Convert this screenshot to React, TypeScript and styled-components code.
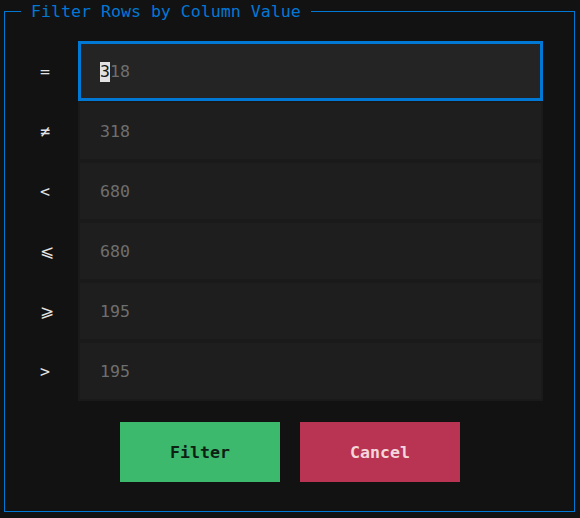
import React from "react";
import styled, { createGlobalStyle } from "styled-components";

const Global = createGlobalStyle`
  html, body {
    margin: 0;
    padding: 0;
    background: #121212;
  }
  body {
    font-family: "DejaVu Sans Mono", "Liberation Mono", monospace;
    font-size: 16.6px;
    line-height: 20px;
  }
`;

const Dialog = styled.fieldset`
  box-sizing: border-box;
  width: 571px;
  height: 511px;
  margin: 1px 5px 6px 4px;
  padding: 20px 0 0 0;
  min-width: 0;
  border: 1px solid #0178d4;
  background: #121212;
`;

const Title = styled.legend`
  margin-left: 16px;
  padding: 0 10px;
  height: 20px;
  line-height: 22px;
  color: #0178d4;
  white-space: pre;
`;

const Rows = styled.div`
  display: grid;
  grid-template-columns: 73px 465px;
  grid-auto-rows: 60px;
`;

const Operator = styled.div`
  display: flex;
  align-items: center;
  padding: 2px 0 0 35px;
  color: #e4e4e4;
`;

const Field = styled.div<{ $focused?: boolean }>`
  box-sizing: border-box;
  display: flex;
  align-items: center;
  height: 60px;
  padding: 2px 0 0 ${(p) => (p.$focused ? 19 : 20)}px;
  border: ${(p) => (p.$focused ? "3px solid #0178d4" : "2px solid #1a1a1a")};
  background: ${(p) => (p.$focused ? "#242424" : "#1e1e1e")};
  color: #6f6f6f;
  white-space: pre;
`;

const Cursor = styled.span`
  display: inline-block;
  height: 20px;
  background: #e2e2e2;
  color: #161616;
`;

const Actions = styled.div`
  display: flex;
  justify-content: center;
  gap: 20px;
  margin-top: 21px;
  padding-left: 1px;
`;

const Button = styled.button<{ $variant: "ok" | "cancel" }>`
  width: 160px;
  height: 60px;
  border: none;
  padding: 0;
  font-family: inherit;
  font-size: 16.6px;
  font-weight: bold;
  background: ${(p) => (p.$variant === "ok" ? "#3cb96d" : "#b93452")};
  color: ${(p) => (p.$variant === "ok" ? "#0e1f14" : "#f3d6dc")};
`;

const filters = [
  { op: "=", value: "318", focused: true },
  { op: "≠", value: "318" },
  { op: "<", value: "680" },
  { op: "⩽", value: "680" },
  { op: "⩾", value: "195" },
  { op: ">", value: "195" },
];

export default function App() {
  return (
    <>
      <Global />
      <Dialog>
        <Title>Filter Rows by Column Value</Title>
        <Rows>
          {filters.map((f) => (
            <React.Fragment key={f.op}>
              <Operator>{f.op}</Operator>
              <Field $focused={f.focused}>
                {f.focused ? (
                  <>
                    <Cursor>{f.value[0]}</Cursor>
                    {f.value.slice(1)}
                  </>
                ) : (
                  f.value
                )}
              </Field>
            </React.Fragment>
          ))}
        </Rows>
        <Actions>
          <Button $variant="ok">Filter</Button>
          <Button $variant="cancel">Cancel</Button>
        </Actions>
      </Dialog>
    </>
  );
}
